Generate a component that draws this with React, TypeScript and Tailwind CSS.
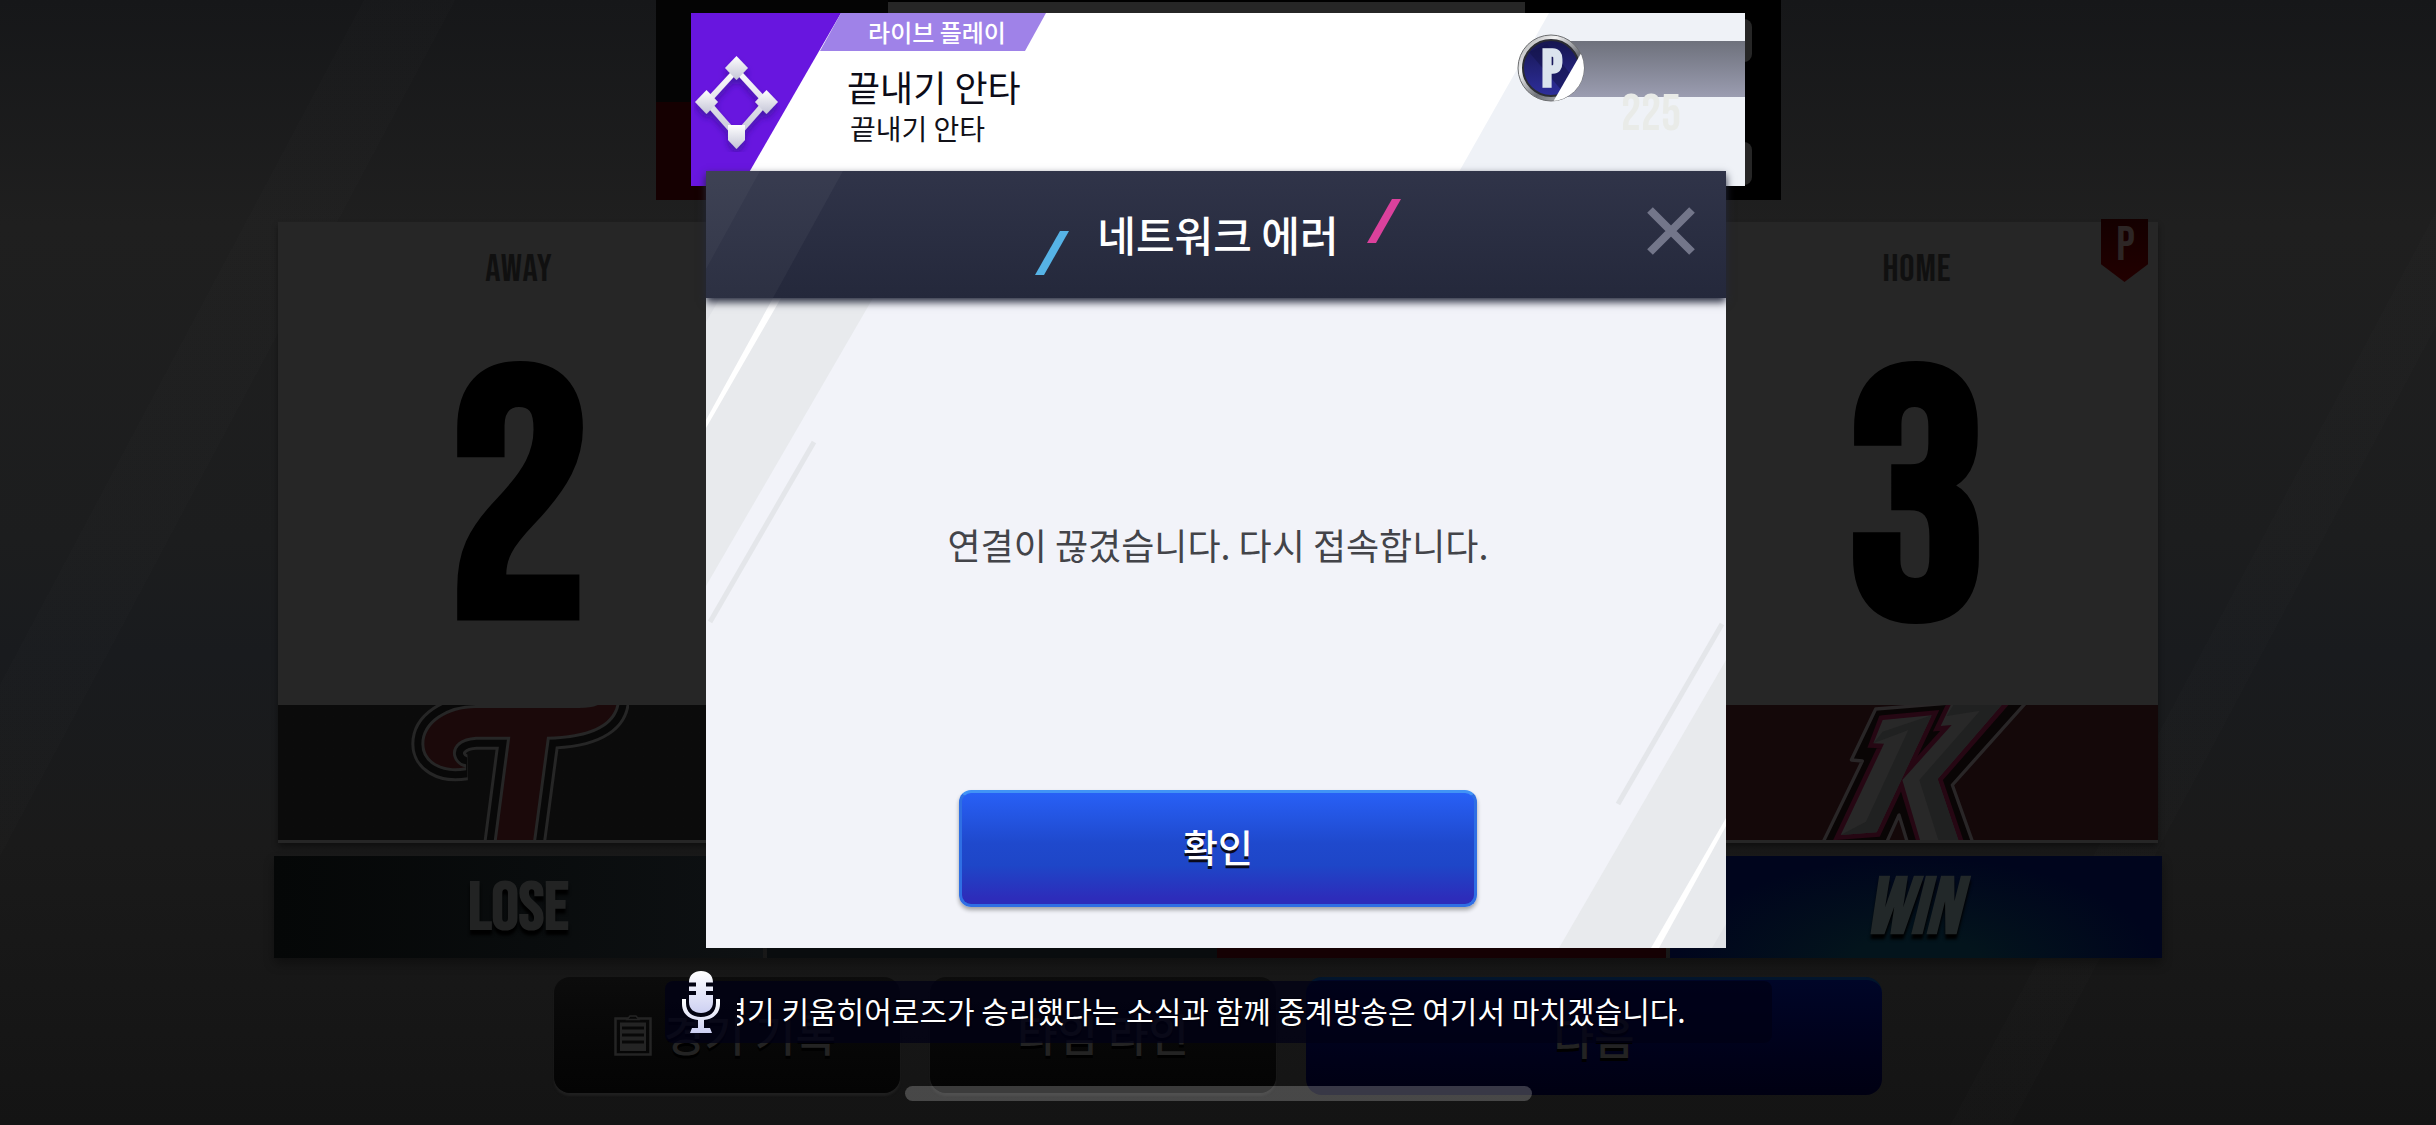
import React from "react";

const condensed =
  "font-['Bebas_Neue','Roboto_Condensed','Liberation_Sans_Narrow','Liberation_Sans',sans-serif]";

function BasesIcon() {
  return (
    <svg viewBox="0 0 86 96" className="h-24 w-[86px]" aria-hidden="true">
      <defs>
        <linearGradient id="bases" x1="0" y1="0" x2="0" y2="1">
          <stop offset="0" stopColor="#ffffff" />
          <stop offset="1" stopColor="#c3c4d6" />
        </linearGradient>
        <filter id="basesShadow" x="-20%" y="-20%" width="140%" height="150%">
          <feDropShadow dx="0" dy="5" stdDeviation="3" floodColor="#2a0880" floodOpacity="0.55" />
        </filter>
      </defs>
      <g filter="url(#basesShadow)" fill="url(#bases)">
        <path
          fillRule="evenodd"
          d="M42.500 10 76 46 42.500 84 9 46Z M42.500 18 17 46 42.500 75 68 46Z"
        />
        <path d="M42.500 0 54 12 42.500 24 31 12Z" />
        <path d="M12.500 34 24 46 12.500 58 1 46Z" />
        <path d="M72.500 34 84 46 72.500 58 61 46Z" />
        <path d="M34 69h17v15l-8.500 9-8.500-9Z" />
      </g>
    </svg>
  );
}

function PointCoin() {
  return (
    <svg viewBox="0 0 68 68" className="size-[68px]" aria-hidden="true">
      <defs>
        <linearGradient id="rim" x1="0" y1="0" x2="1" y2="1">
          <stop offset="0" stopColor="#8d8f92" />
          <stop offset="0.3" stopColor="#f4f4f4" />
          <stop offset="0.6" stopColor="#6d7077" />
          <stop offset="1" stopColor="#d8d8da" />
        </linearGradient>
        <linearGradient id="coin" x1="0" y1="0" x2="0" y2="1">
          <stop offset="0" stopColor="#16164f" />
          <stop offset="1" stopColor="#2e2e9c" />
        </linearGradient>
        <clipPath id="coinClip">
          <circle cx="34" cy="34" r="33" />
        </clipPath>
      </defs>
      <circle cx="34" cy="34" r="33" fill="url(#rim)" stroke="#6c6e70" />
      <circle cx="34" cy="34" r="28" fill="url(#coin)" stroke="#2b2c33" strokeWidth="2" />
      <path d="M12 18 30 10 58 46 46 58Z" fill="#111148" opacity="0.5" />
      <text
        x="35"
        y="52"
        textAnchor="middle"
        fontSize="50"
        fontWeight="700"
        fontFamily="'Bebas Neue','Liberation Sans Narrow','Liberation Sans',sans-serif"
        fill="#dbe4ee"
        stroke="#dbe4ee"
        strokeWidth="2"
      >
        P
      </text>
      <path d="M66 16 36 68H68V16Z" fill="#ffffff" clipPath="url(#coinClip)" />
    </svg>
  );
}

function MicIcon() {
  return (
    <svg viewBox="0 0 40 64" className="h-16 w-10" aria-hidden="true">
      <defs>
        <linearGradient id="mic" x1="0" y1="0" x2="0" y2="1">
          <stop offset="0" stopColor="#ffffff" />
          <stop offset="1" stopColor="#cdd0f2" />
        </linearGradient>
      </defs>
      <g fill="url(#mic)">
        <path d="M8 12.500C8 5 13 1 20 1s12 4 12 11.500H25v4h7v4.500H25v4h7v7C32 39 27 43 20 43S8 39 8 32v-7h7v-4H8v-4.500h7v-4Z" />
        <path d="M1 29h4v4c0 9 6 14 15 14s15-5 15-14v-4h4v5c0 9-6 15-16 16v8h6l2 5H9l2-5h6v-8C7 49 1 43 1 34Z" />
      </g>
    </svg>
  );
}

function ClipboardIcon() {
  return (
    <svg viewBox="0 0 38 41" className="mt-1 h-[41px] w-[38px]" fill="none" aria-hidden="true">
      <path d="M1.500 3.500h35v36h-35Z" stroke="#242424" strokeWidth="2.500" />
      <path d="M6 7.500h26V36H6Z" fill="#242424" />
      <path d="M8 13h22M8 20h22M8 27h22" stroke="#080808" strokeWidth="3" />
      <path d="M13 4.500 16 1h6l3 3.500Z" fill="#080808" stroke="#242424" strokeWidth="1.500" />
    </svg>
  );
}

const twinsShape =
  "M1128 60C1124 130 1050 168 918 170L866 560H757L808 170H705C650 173 628 205 638 232 644 250 660 260 674 262 600 275 550 240 550 192 550 130 620 84 705 84H1015C1050 84 1075 78 1092 60Z";

function TwinsLogo() {
  return (
    <svg viewBox="504 75 660 405" className="h-[135px] w-[220px]" role="img" aria-label="Twins">
      <path d={twinsShape} fill="none" stroke="#262626" strokeWidth="78" />
      <path d={twinsShape} fill="none" stroke="#080808" strokeWidth="60" />
      <path d={twinsShape} fill="none" stroke="#262626" strokeWidth="18" />
      <path d={twinsShape} fill="#1b090a" />
    </svg>
  );
}

function HeroesLogo() {
  return (
    <svg viewBox="321 75 660 405" className="h-[135px] w-[220px]" role="img" aria-label="Heroes">
      <path
        d="M527 87 740 70 L985 60 757 315 830 520H632L597 405 545 520H353L487 243 454 240Z"
        fill="#090505"
        stroke="#292627"
        strokeWidth="10"
        strokeLinejoin="round"
      />
      <g fill="#260713" stroke="#260713" strokeWidth="28" strokeLinejoin="miter">
        <path d="M548 120 695 106 530 457 422 465 552 191 522 190Z" />
        <path d="M760 60 722 138 755 135 607 300 668 500H782L713 297 920 60Z" />
      </g>
      <path d="M548 120 695 106 530 457 422 465 552 191 520 190Z" fill="#282828" />
      <path d="M548 155 695 106 530 457 422 465 498 425 625 150 520 190Z" fill="#202121" />
      <path d="M752 75 722 138 755 135 607 300 660 480H775L713 297 905 75Z" fill="#282828" />
      <path d="M905 75 713 297 775 480H715L658 300 840 92 740 108 760 75Z" fill="#202121" />
    </svg>
  );
}

function Slash({ className }: { className: string }) {
  return (
    <svg viewBox="0 0 34 44" className={`h-11 w-[34px] ${className}`} aria-hidden="true">
      <path d="M25 0h9L9 44H0Z" fill="currentColor" />
    </svg>
  );
}

function TeamScore({ side, score }: { side: string; score: number }) {
  return (
    <div className="flex w-[482px] flex-col items-center pt-6">
      <h2 className={`${condensed} text-[38px] leading-[48px] tracking-wide text-[#101010]`}>{side}</h2>
      <p className={`${condensed} mt-14 text-[350px] leading-[320px] font-bold text-black`}>{score}</p>
    </div>
  );
}

function Scoreboard() {
  return (
    <div className="flex min-w-0 flex-col items-center bg-[linear-gradient(118deg,transparent_0_12%,#ffffff02_12%_15%,transparent_15%_84%,#ffffff02_84%_86%,transparent_86%),linear-gradient(180deg,#161719_0%,#1f1f1f_20%,#1c1d1e_48%,#191b1e_58%,#1a1a1a_75%,#141414_100%)] [grid-area:1/1]">
      <header className="flex h-[200px] w-full max-w-[1125px] bg-black">
        <div className="flex w-[232px] flex-col">
          <div className="h-[102px] bg-[#040404]" />
          <div className="flex-1 bg-[#150001]" />
        </div>
        <div className="mt-0.5 flex-1 bg-[#262626]" />
        <div className="flex w-[256px] flex-col gap-20 pt-[19px] pr-[29px]">
          <div className="h-[43px] rounded-lg bg-[#262626]" />
          <div className="h-[43px] rounded-lg bg-[#262626]" />
        </div>
      </header>

      <section className="relative mt-[22px] w-full max-w-[1880px] border-b-3 border-[#262626] bg-[#262626] shadow-[0_4px_6px_#00000066]">
        <div className="flex h-[483px] justify-between">
          <TeamScore side="AWAY" score={2} />
          <TeamScore side="HOME" score={3} />
        </div>
        <div className="flex h-[135px] justify-between bg-linear-to-r from-[#0b0b0b] from-50% to-[#140809] to-50%">
          <div className="flex w-[482px] justify-center">
            <TwinsLogo />
          </div>
          <div className="flex w-[482px] justify-center">
            <HeroesLogo />
          </div>
        </div>
        <div
          className={`${condensed} absolute -top-[3px] right-2.5 flex h-[63px] w-[47px] justify-center bg-linear-to-b from-[#140000] to-[#220000] pl-0.5 text-5xl leading-[54px] text-[#2d2625] [clip-path:polygon(0_0,100%_0,100%_72%,50%_100%,0_72%)]`}
        >
          P
        </div>
      </section>

      <section className="mt-[13px] flex h-[102px] w-full max-w-[1888px] shadow-[0_6px_10px_#00000055]">
        <p
          className={`${condensed} flex w-[489px] items-center justify-center bg-linear-to-r from-[#050707] to-[#0e1113] pt-1 text-[68px] leading-none font-bold text-[#222323] [text-shadow:0_5px_3px_#000]`}
        >
          LOSE
        </p>
        <div className="mx-1 flex-1 bg-linear-to-r from-[#090c0e] from-50% to-[#150103] to-50%" />
        <p
          className={`${condensed} flex w-[492px] items-center justify-center bg-[radial-gradient(ellipse_at_50%_110%,#03141c_20%,#00051d_70%)] pt-1 pr-2 text-[80px] leading-none font-bold text-[#222829] italic [text-shadow:0_5px_3px_#000]`}
        >
          WIN
        </p>
      </section>

      <nav className="mt-[19px] flex h-[118px] w-full max-w-[1328px] gap-[30px] text-[44px] font-medium text-[#232323]">
        <button className="flex h-[116px] w-[346px] items-center justify-center gap-3 rounded-2xl bg-linear-to-b from-[#0c0c0c] to-[#040404] pr-1 pb-1 shadow-[0_3px_2px_#1f1f1f] [text-shadow:0_3px_0_#000]">
          <ClipboardIcon />
          경기 기록
        </button>
        <button className="flex h-[116px] w-[346px] items-center justify-center rounded-2xl bg-linear-to-b from-[#0c0c0c] to-[#040404] pb-1 shadow-[0_3px_2px_#1f1f1f] [text-shadow:0_3px_0_#000]">
          타임 라인
        </button>
        <button className="flex flex-1 items-center justify-center rounded-2xl border-t-3 border-[#02152c] bg-linear-to-b from-[#000628] to-[#000012] pb-1 [text-shadow:0_3px_0_#000]">
          다음
        </button>
      </nav>
    </div>
  );
}

function LivePlayToast() {
  return (
    <section className="relative flex h-[173px] w-full max-w-[1054px] bg-white text-[#111118]">
      <div className="flex w-[150px] items-center bg-[#6816df] pt-2 pl-[3px] [clip-path:polygon(0_0,100%_0,33.500%_100%,0_100%)]">
        <BasesIcon />
      </div>
      <div className="-ml-[21px] flex-1">
        <p className="flex h-[38px] w-[226px] items-center justify-center bg-[#9f82e8] pl-2 text-2xl font-medium text-white [clip-path:polygon(21px_0,100%_0,205px_100%,0_100%)]">
          라이브 플레이
        </p>
        <h2 className="mt-[13px] pl-[27px] text-4xl leading-11 text-[#0c0c18]">끝내기 안타</h2>
        <p className="pl-[30px] text-[28px] leading-10">끝내기 안타</p>
      </div>
      <div className="relative w-[294px]">
        <div className="h-full bg-[#eff2f7] [clip-path:polygon(98px_0,100%_0,100%_100%,0_100%)]" />
        <div className="absolute top-7 right-0 h-14 w-[180px] bg-linear-to-b from-[#6e717c] to-[#9b9db1]" />
        <div className="absolute top-[21px] right-40">
          <PointCoin />
        </div>
        <p className={`${condensed} absolute top-[80px] right-16 text-[50px] leading-[44px] text-[#e9ebe8]`}>
          225
        </p>
      </div>
    </section>
  );
}

function BodyDecoration({ className }: { className: string }) {
  return (
    <svg viewBox="0 0 170 330" className={`absolute h-[330px] w-[170px] ${className}`} aria-hidden="true">
      <path d="M0 0H167L0 288Z" fill="#e8eaed" />
      <path d="M0 0H14L0 24Z" fill="#e1e3e7" />
      <path d="M67 0H75L0 130V122Z" fill="#ffffff" />
      <path d="M108 144 4 324" stroke="#e4e6ea" strokeWidth="5" />
    </svg>
  );
}

function ErrorDialog() {
  return (
    <section
      role="dialog"
      aria-labelledby="dialog-title"
      className="relative -mt-[15px] mr-1 flex w-full max-w-[1020px] flex-col bg-[#f2f3f9]"
    >
      <header className="relative z-10 flex h-[127px] items-center justify-center bg-linear-to-b from-[#303449] to-[#24283b] shadow-[0_4px_8px_#24283b]">
        <svg viewBox="0 0 137 127" className="absolute top-0 left-0 h-full w-[137px]" aria-hidden="true">
          <path d="M0 0H137L67 127H0Z" fill="#ffffff" opacity="0.04" />
          <path d="M0 0H54L0 98Z" fill="#ffffff" opacity="0.03" />
        </svg>
        <div className="flex items-center gap-7 pl-1">
          <Slash className="mt-9 text-[#56b3e6]" />
          <h1 id="dialog-title" className="pb-0.5 text-[42px] leading-none font-medium text-white">
            네트워크 에러
          </h1>
          <Slash className="mb-7 text-[#db419c]" />
        </div>
        <button aria-label="닫기" className="absolute top-8 right-[27px] p-1">
          <svg viewBox="0 0 48 48" className="size-12" aria-hidden="true">
            <path d="M3 3 45 45M45 3 3 45" stroke="#73768a" strokeWidth="8" />
          </svg>
        </button>
      </header>
      <div className="relative flex h-[650px] flex-col items-center overflow-hidden pb-[41px]">
        <BodyDecoration className="top-0 left-0" />
        <BodyDecoration className="right-0 bottom-0 rotate-180" />
        <p className="relative flex flex-1 items-center pl-1 text-4xl text-[#434449]">
          연결이 끊겼습니다. 다시 접속합니다.
        </p>
        <button className="relative ml-1 h-[117px] w-[518px] rounded-xl border-3 border-[#2f6fe4] border-t-[#4193f6] bg-[linear-gradient(180deg,#2860f6_0%,#1f49cd_45%,#1e46c8_65%,#2d2cba_95%)] pb-1.5 text-[38px] font-medium text-white shadow-[0_3px_4px_#00000055] [text-shadow:0_3px_0_#0a0a1c]">
          확인
        </button>
      </div>
    </section>
  );
}

function Commentary() {
  return (
    <div className="mt-[33px] flex h-[62px] w-full max-w-[1107px] items-center rounded-lg bg-[#000014]/75 pl-4">
      <div className="-mt-5">
        <MicIcon />
      </div>
      <p className="mb-1 ml-4 flex flex-1 overflow-hidden text-[30px] leading-10 text-white [text-shadow:0_0_2px_#000]">
        <span className="-ml-[17px] whitespace-nowrap">
          경기 키움히어로즈가 승리했다는 소식과 함께 중계방송은 여기서 마치겠습니다.
        </span>
      </p>
    </div>
  );
}

export default function App() {
  return (
    <main className="grid min-h-screen grid-cols-1 overflow-hidden bg-[#161616] font-['Noto_Sans_CJK_KR',sans-serif]">
      <Scoreboard />
      <div className="relative z-10 flex flex-col items-center pt-[13px] [grid-area:1/1]">
        <LivePlayToast />
        <ErrorDialog />
        <Commentary />
        <div className="mt-[43px] h-[15px] w-full max-w-[627px] rounded-full bg-white/22" />
      </div>
    </main>
  );
}
